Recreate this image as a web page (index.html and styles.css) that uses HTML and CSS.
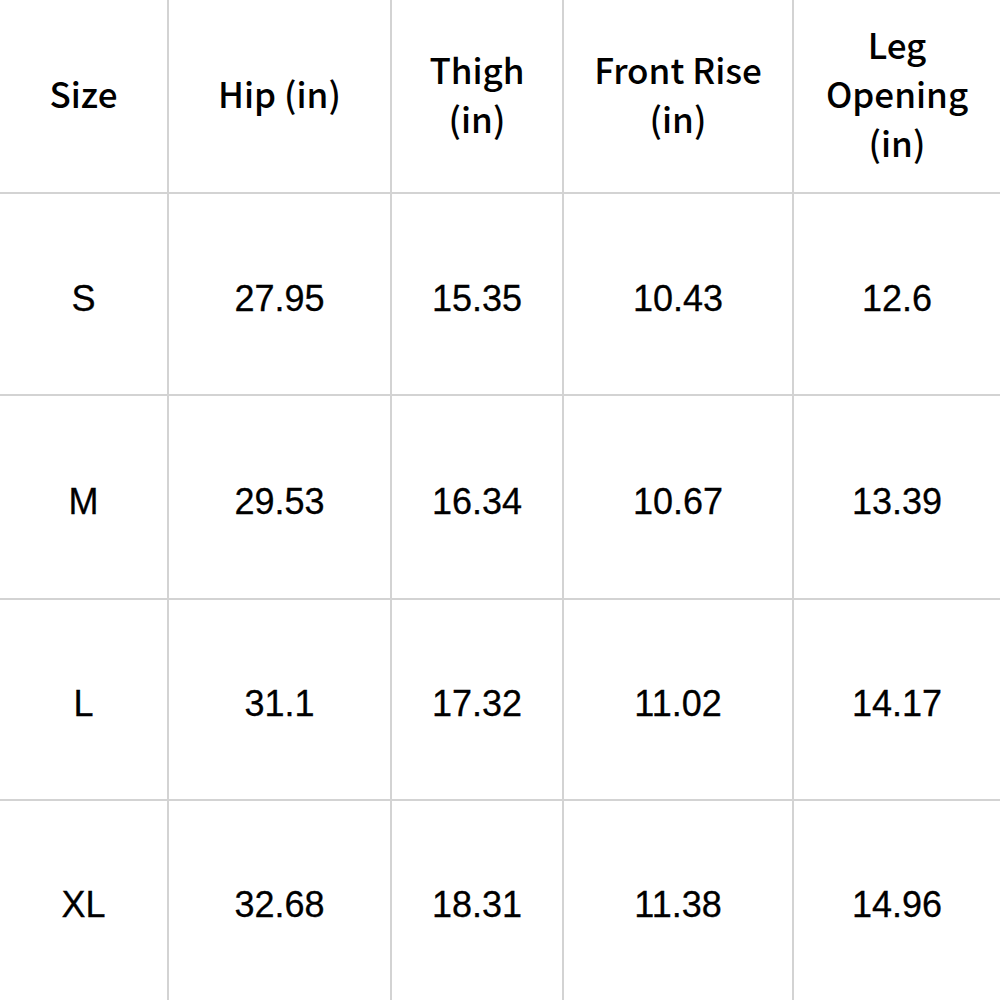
FILE: index.html
```html
<!DOCTYPE html>
<html>
<head>
<meta charset="utf-8">
<link rel="stylesheet" href="styles.css">
</head>
<body>
<div class="table">
  <div class="cell head">Size</div>
  <div class="cell head">Hip (in)</div>
  <div class="cell head">Thigh<br>(in)</div>
  <div class="cell head">Front Rise<br>(in)</div>
  <div class="cell head">Leg<br>Opening<br>(in)</div>

  <div class="cell">S</div>
  <div class="cell">27.95</div>
  <div class="cell">15.35</div>
  <div class="cell">10.43</div>
  <div class="cell">12.6</div>

  <div class="cell">M</div>
  <div class="cell">29.53</div>
  <div class="cell">16.34</div>
  <div class="cell">10.67</div>
  <div class="cell">13.39</div>

  <div class="cell">L</div>
  <div class="cell">31.1</div>
  <div class="cell">17.32</div>
  <div class="cell">11.02</div>
  <div class="cell">14.17</div>

  <div class="cell">XL</div>
  <div class="cell">32.68</div>
  <div class="cell">18.31</div>
  <div class="cell">11.38</div>
  <div class="cell">14.96</div>
</div>
</body>
</html>
```
FILE: styles.css
```css
html, body {
  margin: 0;
  padding: 0;
  background: #ffffff;
}
.table {
  width: 1000px;
  height: 1000px;
  display: grid;
  grid-template-columns: 167px 221px 170px 228px 1fr;
  grid-template-rows: 192px 200px 202px 199px 1fr;
  gap: 2px;
  background: #d3d3d3;
  overflow: hidden;
}
.cell {
  background: #ffffff;
  display: flex;
  align-items: center;
  justify-content: center;
  text-align: center;
  font-family: "Liberation Sans", Arial, sans-serif;
  font-size: 36px;
  color: #000000;
  padding-top: 9px;
  -webkit-text-stroke: 0.3px #000;
}
.head {
  font-family: "Noto Sans CJK SC", "Liberation Sans", sans-serif;
  font-weight: 500;
  font-size: 35px;
  line-height: 49px;
  padding-top: 0;
  padding-bottom: 7px;
  -webkit-text-stroke: 0;
}
```
